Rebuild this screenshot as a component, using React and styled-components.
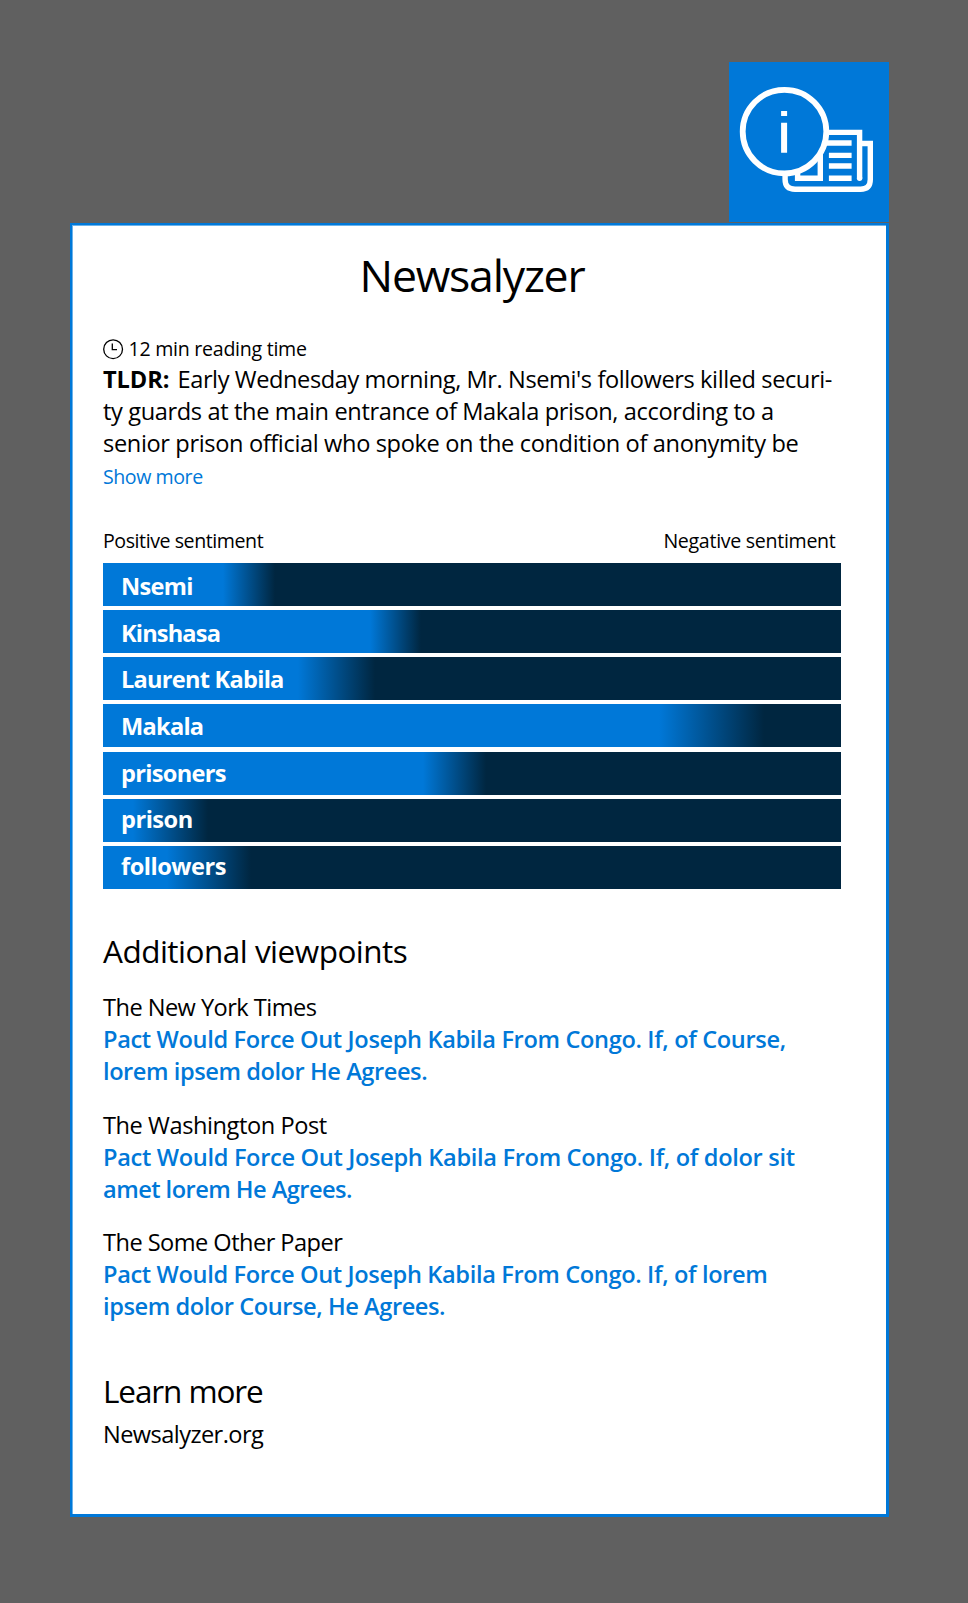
import React from 'react';
import styled, { createGlobalStyle } from 'styled-components';

const blue = '#0078d8';
const navy = '#002640';

const GlobalStyle = createGlobalStyle`
  * { box-sizing: border-box; }
  body { margin: 0; background: #606060; }
`;

const Page = styled.main`
  width: 968px;
  height: 1603px;
  padding: 62px 79px 0 70px;
  display: flex;
  flex-direction: column;
  background: #606060;
  color: #000;
  font-family: 'Open Sans', 'Noto Sans', sans-serif;
  white-space: nowrap;
`;

const Badge = styled.div`
  width: 160px;
  height: 160px;
  margin-bottom: 1px;
  align-self: flex-end;
  background: ${blue};
  svg { display: block; }
`;

const Card = styled.article`
  height: 1294px;
  padding: 0 45px 0 31px;
  border: solid ${blue};
  border-width: 2px 3px 3px 2px;
  box-shadow: inset 1px 1px 0 #6cb2e9;
  background: #fff;
`;

const Title = styled.h1`
  margin: 20px 0 0;
  font-size: 44.6px;
  line-height: 60px;
  font-weight: 400;
  text-align: center;
  letter-spacing: ${(p) => p.$track}px;
`;

const Small = styled.div`
  font-size: 19.6px;
  line-height: 28px;
  letter-spacing: ${(p) => p.$track}px;
`;

const ReadingTime = styled.div`
  display: flex;
  align-items: center;
  gap: 4.5px;
  margin-top: 30px;
  height: 28px;
`;

const Summary = styled.p`
  margin: 0;
  font-size: 23.6px;
  line-height: 32px;
`;

const Line = styled.span`
  display: block;
  letter-spacing: ${(p) => p.$track}px;
`;

const Lead = styled.b`
  font-weight: 700;
  margin-right: 2.5px;
  letter-spacing: ${(p) => p.$track}px;
`;

const ShowMore = styled(Small)`
  margin-top: 4px;
  color: ${blue};
`;

const Scale = styled.div`
  display: flex;
  justify-content: space-between;
  margin-top: 36px;
  padding-right: 5.5px;
`;

const Bars = styled.div`
  display: flex;
  flex-direction: column;
  gap: 4.17px;
  margin-top: 8px;
`;

const Bar = styled.div`
  height: 43px;
  padding-left: 18px;
  color: #fff;
  font-size: 23.6px;
  font-weight: 700;
  line-height: ${(p) => p.$line}px;
  letter-spacing: ${(p) => p.$track}px;
  background: linear-gradient(to right, ${blue} ${(p) => p.$from}px, ${navy} ${(p) => p.$to}px);
`;

const Heading = styled.h2`
  margin: ${(p) => p.$top}px 0 0;
  font-size: 31.5px;
  line-height: 40px;
  font-weight: 400;
  letter-spacing: ${(p) => p.$track}px;
`;

const Viewpoint = styled.section`
  margin-top: ${(p) => p.$top}px;
  font-size: 23.6px;
  line-height: 32px;
`;

const Headline = styled.div`
  color: ${blue};
  font-weight: 600;
`;

const Site = styled.div`
  margin-top: 7px;
  font-size: 23.6px;
  line-height: 32px;
  letter-spacing: ${(p) => p.$track}px;
`;

const NewsIcon = () => (
  <svg width="160" height="160" viewBox="0.4 0 160 160" fill="none" stroke="#fff">
    <path d="M90 70.4H131V116.5" strokeWidth="5.4" />
    <circle cx="131" cy="116.2" r="2.7" fill="#fff" stroke="none" />
    <path d="M131 81.5H141.7V117.5Q141.7 127.2 132 127.2H66.5Q56.5 127.2 56.5 117.5V108" strokeWidth="5.4" />
    <path d="M90 81H123M100.3 93.4H123M100.3 104H123M100.3 116.2H123" strokeWidth="5.4" />
    <path d="M91.7 85V116.2H69V104" strokeWidth="5.4" />
    <circle cx="55.9" cy="69.6" r="41.8" fill={blue} strokeWidth="5.8" />
    <path d="M55.5 49V54M55.5 60.7V90.7" strokeWidth="6" />
  </svg>
);

const ClockIcon = () => (
  <svg width="21" height="21" viewBox="0 0 21 21" fill="none" stroke="#000" strokeWidth="1.3">
    <circle cx="10.1" cy="10.2" r="9.4" />
    <path d="M9.3 4.6V10.7H14" />
  </svg>
);

const bars = [
  { label: 'Nsemi', from: 120, to: 172, track: -0.7, line: 47 },
  { label: 'Kinshasa', from: 267, to: 318, track: -0.85, line: 47 },
  { label: 'Laurent Kabila', from: 195, to: 272, track: -0.75, line: 45 },
  { label: 'Makala', from: 556, to: 661, track: -0.75, line: 45 },
  { label: 'prisoners', from: 320, to: 383, track: -0.7, line: 43 },
  { label: 'prison', from: 30, to: 105, track: -0.5, line: 41 },
  { label: 'followers', from: 64, to: 148, track: -0.48, line: 41 },
];

const viewpoints = [
  {
    source: 'The New York Times', track: -0.54, top: 20,
    lines: [
      ['Pact Would Force Out Joseph Kabila From Congo. If, of Course,', -0.355],
      ['lorem ipsem dolor He Agrees.', -0.43],
    ],
  },
  {
    source: 'The Washington Post', track: -0.43, top: 22,
    lines: [
      ['Pact Would Force Out Joseph Kabila From Congo. If, of dolor sit', -0.325],
      ['amet lorem He Agrees.', -0.53],
    ],
  },
  {
    source: 'The Some Other Paper', track: -0.54, top: 21,
    lines: [
      ['Pact Would Force Out Joseph Kabila From Congo. If, of lorem', -0.36],
      ['ipsem dolor Course, He Agrees.', -0.43],
    ],
  },
];

export default function App() {
  return (
    <Page>
      <GlobalStyle />
      <Badge><NewsIcon /></Badge>
      <Card>
        <Title $track={-1.2}>Newsalyzer</Title>
        <ReadingTime>
          <ClockIcon />
          <Small $track={-0.27}>12 min reading time</Small>
        </ReadingTime>
        <Summary>
          <Line $track={-0.41}><Lead $track={-0.1}>TLDR:</Lead> Early Wednesday morning, Mr. Nsemi's followers killed securi-</Line>
          <Line $track={-0.373}>ty guards at the main entrance of Makala prison, according to a</Line>
          <Line $track={-0.362}>senior prison official who spoke on the condition of anonymity be</Line>
        </Summary>
        <ShowMore $track={-0.45}>Show more</ShowMore>
        <Scale>
          <Small $track={-0.44}>Positive sentiment</Small>
          <Small $track={-0.3}>Negative sentiment</Small>
        </Scale>
        <Bars>
          {bars.map((b) => (
            <Bar key={b.label} $from={b.from} $to={b.to} $track={b.track} $line={b.line}>{b.label}</Bar>
          ))}
        </Bars>
        <Heading $top={42} $track={-0.51}>Additional viewpoints</Heading>
        {viewpoints.map((v) => (
          <Viewpoint key={v.source} $top={v.top}>
            <Line $track={v.track}>{v.source}</Line>
            <Headline>
              {v.lines.map(([text, track]) => <Line key={text} $track={track}>{text}</Line>)}
            </Headline>
          </Viewpoint>
        ))}
        <Heading $top={49} $track={-1.1}>Learn more</Heading>
        <Site $track={-0.57}>Newsalyzer.org</Site>
      </Card>
    </Page>
  );
}
